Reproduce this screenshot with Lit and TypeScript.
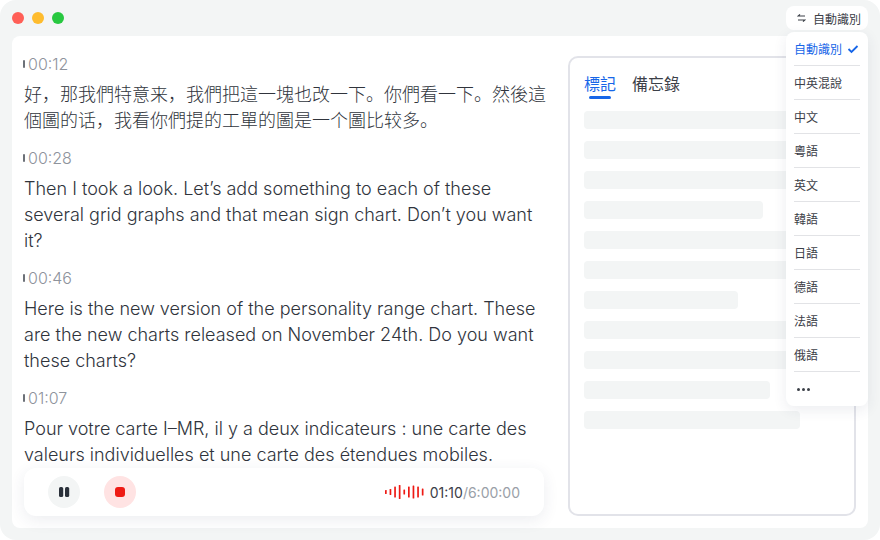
import { LitElement, html, css, svg } from "lit";
import { customElement } from "lit/decorators.js";

const segments = [
  { t: "00:12", x: "好，那我們特意来，我們把這一塊也改一下。你們看一下。然後這個圖的话，我看你們提的工單的圖是一个圖比较多。" },
  { t: "00:28", x: "Then I took a look. Let’s add something to each of these several grid graphs and that mean sign chart. Don’t you want it?" },
  { t: "00:46", x: "Here is the new version of the personality range chart. These are the new charts released on November 24th. Do you want these charts?" },
  { t: "01:07", x: "Pour votre carte I–MR, il y a deux indicateurs : une carte des valeurs individuelles et une carte des étendues mobiles." },
];
const rows = [216, 216, 216, 179, 216, 216, 154, 216, 216, 186, 216];
const langs = ["中英混說", "中文", "粵語", "英文", "韓語", "日語", "德語", "法語", "俄語"];
const wave = [4, 6, 11, 14, 5, 11, 13, 11, 7];

@customElement("app-root")
export class AppRoot extends LitElement {
  static styles = css`
    :host { display: block; width: 880px; height: 540px; background: #fff; font-family: Inter, "Noto Sans CJK SC", sans-serif; }
    .win { position: relative; width: 880px; height: 540px; box-sizing: border-box; background: #f3f5f5; border-radius: 16px; padding: 0 12px 12px; display: flex; flex-direction: column; overflow: hidden; }
    .title { height: 36px; flex: none; display: flex; align-items: center; gap: 8px; }
    .dot { width: 12px; height: 12px; border-radius: 50%; }
    .card { flex: 1; min-height: 0; background: #fff; border-radius: 8px; display: flex; gap: 20px; padding: 20px 12px 12px 12px; box-sizing: border-box; }
    .left { width: 524px; flex: none; position: relative; display: flex; flex-direction: column; }
    .scroll { flex: 1; min-height: 0; overflow: hidden; margin: -3px 0 0 -2px; padding-left: 2px; }
    .seg { margin-bottom: 13px; }
    .ts { display: flex; align-items: center; gap: 3px; height: 22px; margin-bottom: 7px; font-size: 16px; line-height: 22px; font-weight: 300; color: #8e939c; }
    .tick { width: 2px; height: 8px; background: #6c7178; border-radius: 1px; margin-left: -1px; }
    .txt { font-size: 18px; line-height: 26px; font-weight: 300; color: #30343c; }
    .bar { position: absolute; left: 0; right: 4px; bottom: 0; height: 48px; background: #fff; border-radius: 12px; box-shadow: 0 4px 16px rgba(40, 50, 90, .09); display: flex; align-items: center; padding: 0 24px; box-sizing: border-box; gap: 24px; }
    .btn { width: 32px; height: 32px; border-radius: 50%; display: flex; align-items: center; justify-content: center; }
    .pause { background: #f3f5f5; }
    .rec { background: #ffe3e3; }
    .recdot { width: 10px; height: 10px; background: #ee1a14; border-radius: 3px; }
    .grow { flex: 1; }
    .status { display: flex; align-items: center; gap: 6px; font-size: 14px; color: #3c4048; }
    .status span { color: #9a9fa8; }
    .panel { width: 288px; flex: none; box-sizing: border-box; border: 2px solid #e2e3e9; border-radius: 10px; padding: 14px; }
    .tabs { display: flex; gap: 16px; font-size: 16px; line-height: 24px; color: #3c4048; height: 39px; }
    .tab { position: relative; }
    .tab.on { color: #1766e8; }
    .tab.on::after { content: ""; position: absolute; left: 5px; right: 5px; top: 24px; height: 3px; background: #1766e8; border-radius: 2px; }
    .row { height: 18px; background: #f3f5f5; border-radius: 4px; margin-bottom: 12px; }
    .top { position: absolute; left: 786px; top: 6px; width: 82px; height: 24px; box-sizing: border-box; background: #fff; border-radius: 8px; display: flex; align-items: center; gap: 7px; padding-left: 11px; font-size: 12px; color: #3c4048; }
    .menu { position: absolute; left: 786px; top: 32px; width: 82px; height: 374px; box-sizing: border-box; background: #fff; border-radius: 8px; box-shadow: 0 4px 14px rgba(40, 50, 90, .09); padding: 0 8px; font-size: 12px; color: #3c4048; }
    .item { height: 34px; box-sizing: border-box; border-bottom: 1px solid #e2e3e6; display: flex; align-items: center; gap: 5px; }
    .item.on { color: #1766e8; }
    .item.more { border-bottom: 0; padding-left: 3px; gap: 2px; }
    .item.more i { width: 3px; height: 3px; border-radius: 50%; background: #3c4048; }
  `;

  render() {
    return html`<div class="win">
      <div class="title">
        <div class="dot" style="background:#ff5f57"></div>
        <div class="dot" style="background:#febc2e"></div>
        <div class="dot" style="background:#28c840"></div>
      </div>
      <div class="card">
        <div class="left">
          <div class="scroll">
            ${segments.map(
              (s) => html`<div class="seg">
                <div class="ts"><i class="tick"></i>${s.t}</div>
                <div class="txt">${s.x}</div>
              </div>`
            )}
          </div>
          <div class="bar">
            <div class="btn pause">
              <svg width="11" height="10" viewBox="0 0 11 10"><rect x="0" y="0" width="4.2" height="10" rx="1.6" fill="#2a303a"/><rect x="6" y="0" width="4.2" height="10" rx="1.6" fill="#2a303a"/></svg>
            </div>
            <div class="btn rec"><div class="recdot"></div></div>
            <div class="grow"></div>
            <div class="status">
              <svg width="39" height="16" viewBox="0 0 39 16">
                ${wave.map((h, i) => svg`<rect x=${i * 4.6} y=${8 - h / 2} width="1.7" height=${h} rx=".6" fill="#ee1a14"/>`)}
              </svg>
              <div>01:10<span>/6:00:00</span></div>
            </div>
          </div>
        </div>
        <div class="panel">
          <div class="tabs"><div class="tab on">標記</div><div class="tab">備忘錄</div></div>
          ${rows.map((w) => html`<div class="row" style="width:${w}px"></div>`)}
        </div>
      </div>
      <div class="top">
        <svg width="9" height="8" viewBox="0 0 9 8" fill="none" stroke="#3c4048" stroke-width="1.1"><path d="M8 2H1.2L3 .4M1 6h6.8L6 7.6"/></svg>
        自動識別
      </div>
      <div class="menu">
        <div class="item on">自動識別
          <svg width="12" height="10" viewBox="0 0 12 10" fill="none" stroke="#1766e8" stroke-width="1.8"><path d="M1.5 5l3 3 6-6"/></svg>
        </div>
        ${langs.map((l) => html`<div class="item">${l}</div>`)}
        <div class="item more"><i></i><i></i><i></i></div>
      </div>
    </div>`;
  }
}
